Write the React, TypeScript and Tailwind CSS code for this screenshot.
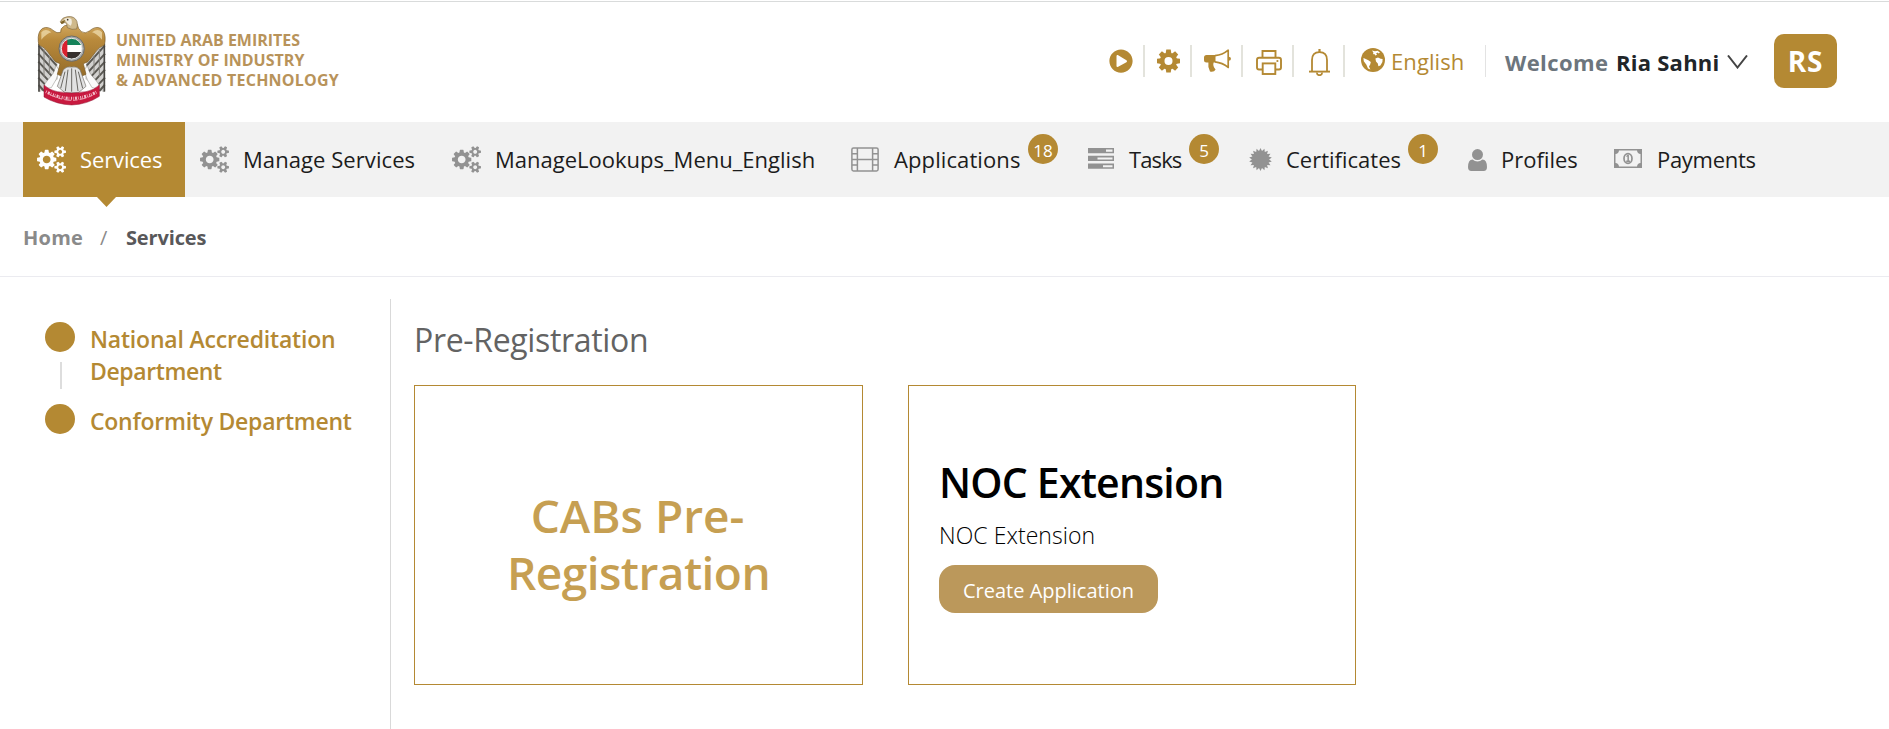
import type { ReactNode } from "react";
import { FaPlayCircle } from "react-icons/fa";

const GEAR_TEETH = [0, 45, 90, 135, 180, 225, 270, 315];

function burst(points: number, outer: number, inner: number) {
  return Array.from({ length: points * 2 }, (_, i) => {
    const a = (Math.PI * i) / points - Math.PI / 2;
    const r = i % 2 ? inner : outer;
    return `${(12 + r * Math.cos(a)).toFixed(2)},${(12 + r * Math.sin(a)).toFixed(2)}`;
  }).join(" ");
}

function CogsIcon() {
  return (
    <svg className="h-[27px] w-[29px]" viewBox="0 0 1920 1792" fill="currentColor">
      <path d="M896 896q0-106-75-181t-181-75-181 75-75 181 75 181 181 75 181-75 75-181zm768 512q0-52-38-90t-90-38-90 38-38 90q0 53 37.5 90.5t90.5 37.5 90.5-37.5 37.5-90.5zm0-1024q0-52-38-90t-90-38-90 38-38 90q0 53 37.5 90.5t90.5 37.5 90.5-37.5 37.5-90.5zm-384 421v185q0 10-7 19.5t-16 10.5l-155 24q-11 35-32 76 34 48 90 115 7 11 7 20 0 12-7 19-23 30-82.5 89.5t-78.5 59.5q-11 0-21-7l-115-90q-37 19-77 31-11 108-23 155-7 24-30 24h-186q-11 0-20-7.5t-10-17.5l-23-153q-34-10-75-31l-118 89q-7 7-20 7-11 0-21-8-144-133-144-160 0-9 7-19 10-14 41-53t47-61q-23-44-35-82l-152-24q-10-1-17-9.5t-7-19.5v-185q0-10 7-19.5t16-10.5l155-24q11-35 32-76-34-48-90-115-7-11-7-20 0-12 7-20 22-30 82-89t79-59q11 0 21 7l115 90q34-18 77-32 11-108 23-154 7-24 30-24h186q11 0 20 7.5t10 17.5l23 153q34 10 75 31l118-89q8-7 20-7 11 0 21 8 144 133 144 160 0 8-7 19-12 16-42 54t-45 60q23 48 34 82l152 23q10 2 17 10.5t7 19.5zm640 533v140q0 16-149 31-12 27-30 52 51 113 51 138 0 4-4 7-122 71-124 71-8 0-46-47t-52-68q-20 2-30 2t-30-2q-14 21-52 68t-46 47q-2 0-124-71-4-3-4-7 0-25 51-138-18-25-30-52-149-15-149-31v-140q0-16 149-31 13-29 30-52-51-113-51-138 0-4 4-7 4-2 35-20t59-34 30-16q8 0 46 46.5t52 67.5q20-2 30-2t30 2q51-71 92-112l6-2q4 0 124 70 4 3 4 7 0 25-51 138 17 23 30 52 149 15 149 31zm0-1024v140q0 16-149 31-12 27-30 52 51 113 51 138 0 4-4 7-122 71-124 71-8 0-46-47t-52-68q-20 2-30 2t-30-2q-14 21-52 68t-46 47q-2 0-124-71-4-3-4-7 0-25 51-138-18-25-30-52-149-15-149-31v-140q0-16 149-31 13-29 30-52-51-113-51-138 0-4 4-7 4-2 35-20t59-34 30-16q8 0 46 46.5t52 67.5q20-2 30-2t30 2q51-71 92-112l6-2q4 0 124 70 4 3 4 7 0 25-51 138 17 23 30 52 149 15 149 31z" />
    </svg>
  );
}

function GearIcon() {
  return (
    <svg className="h-[24px] w-[23px]" viewBox="-12 -12 24 24" fill="currentColor">
      {GEAR_TEETH.map((a) => (
        <path key={a} d="M-3 -7.5 L-2.3 -12 H2.3 L3 -7.5Z" transform={`rotate(${a})`} />
      ))}
      <circle r="6.6" fill="none" stroke="currentColor" strokeWidth="4.8" />
    </svg>
  );
}

function HornIcon() {
  return (
    <svg className="h-[24px] w-[27px]" viewBox="0 0 27 24" fill="currentColor">
      <path d="M0 8.5 Q0 6 2.5 6 H11.5 V13.5 H9.6 Q8.4 17 11.6 20.5 Q10 23.5 6 22.5 Q3.6 18 4.4 13.5 H2.5 Q0 13.5 0 11Z" />
      <path d="M11 6.7 Q18.5 6 24.2 1.2 V18.4 Q18.5 13.6 11 12.8" fill="none" stroke="currentColor" strokeWidth="1.7" strokeLinejoin="round" />
      <path d="M24.5 7.8 Q27 8 27 9.8 T24.5 11.8Z" />
    </svg>
  );
}

function PrinterIcon() {
  return (
    <svg className="h-[25px] w-[26px]" viewBox="0 0 26 25" fill="none" stroke="currentColor" strokeWidth="1.9">
      <path d="M6.5 7.5 V1 H19.5 V7.5" />
      <path d="M6.5 19.5 H3 Q1 19.5 1 17.5 V10 Q1 7.7 3.2 7.7 H22.8 Q25 7.7 25 10 V17.5 Q25 19.5 23 19.5 H19.5" />
      <rect x="6.7" y="13.4" width="12.6" height="10.6" />
      <circle cx="21.4" cy="11" r="1.1" fill="currentColor" stroke="none" />
    </svg>
  );
}

function BellIcon() {
  return (
    <svg className="h-[27px] w-[21px]" viewBox="0 0 21 27" fill="none" stroke="currentColor" strokeWidth="1.8">
      <path d="M3 22 V11 Q3 3.2 10.5 3.2 T18 11 V22" />
      <path d="M0 22.6 H21" strokeWidth="1.9" />
      <path d="M10.5 0 V3" strokeWidth="2.2" />
      <path d="M7.8 23.5 Q8 26.2 10.5 26.2 T13.2 23.5" />
    </svg>
  );
}

function GlobeIcon() {
  return (
    <svg className="h-[24px] w-[24px]" viewBox="0 0 24 24">
      <circle cx="12" cy="12" r="12" fill="currentColor" />
      <path
        fill="#fff"
        d="M11 2.6 L14 3.2 L16.6 2.8 L19 4.4 L17.6 5.6 L16.5 4.6 L15 5.8 L16.2 6.8 L14.2 7.4 L13.4 6 L12 6.2 L12.4 4.6Z
           M2.4 10 L4.2 10.8 L7.4 12.2 L9.8 14 L9.2 16.6 L8 18.6 L9.4 21.4 L7 20.6 L5.4 16.8 L2.8 13.2Z
           M14.4 10.6 L17 9.4 L19.6 10.8 L21.6 11 L21.4 14 L19.4 17.4 L17.4 18.2 L16.8 15.4 L15 13.6Z"
      />
    </svg>
  );
}

function FilmIcon() {
  return (
    <svg className="h-[25px] w-[28px]" viewBox="0 0 28 25" fill="none" stroke="currentColor" strokeWidth="1.5">
      <rect x="0.9" y="0.9" width="26.2" height="23" rx="1.6" />
      <path d="M6.4 1 V24 M21.6 1 V24 M6.4 12.4 H21.6" />
      <path d="M1 6.7 H6.4 M1 12.4 H6.4 M1 18.1 H6.4 M21.6 6.7 H27 M21.6 12.4 H27 M21.6 18.1 H27" />
    </svg>
  );
}

function TasksIcon() {
  return (
    <svg className="-mt-0.5 h-[21px] w-[26px]" viewBox="0 0 26 21" fill="currentColor">
      <path fillRule="evenodd" d="M0 0 H26 V5.2 H0Z M18 1.6 V3.7 H24.5 V1.6Z" />
      <path fillRule="evenodd" d="M0 7.8 H26 V13 H0Z M9.5 9.4 V11.5 H24.5 V9.4Z" />
      <path fillRule="evenodd" d="M0 15.6 H26 V20.8 H0Z M15 17.2 V19.3 H24.5 V17.2Z" />
    </svg>
  );
}

function CertificateIcon() {
  return (
    <svg className="h-[23px] w-[23px]" viewBox="0 0 24 24" fill="currentColor">
      <polygon points={burst(18, 12, 9)} />
    </svg>
  );
}

function UserIcon() {
  return (
    <svg className="h-[22px] w-[19px]" viewBox="0 0 19 22" fill="currentColor">
      <circle cx="9.5" cy="5.6" r="5.5" />
      <path d="M4.6 10.4 Q6.8 12.4 9.5 12.4 T14.4 10.4 Q19 10.8 19 18 Q19 22 15.6 22 H3.4 Q0 22 0 18 Q0 10.8 4.6 10.4Z" />
    </svg>
  );
}

function MoneyIcon() {
  return (
    <svg className="-mt-0.5 h-[19px] w-[28px]" viewBox="0 0 28 19" fill="currentColor">
      <path fillRule="evenodd" d="M0 0 H28 V19 H0Z M5 1.5 Q4.6 4.6 1.5 5 V14 Q4.6 14.4 5 17.5 H23 Q23.4 14.4 26.5 14 V5 Q23.4 4.6 23 1.5Z" />
      <ellipse cx="14" cy="9.5" rx="4" ry="4.9" fill="none" stroke="currentColor" strokeWidth="1.7" />
      <path d="M12.2 7 L13.6 5.8 H14.9 V11.6 H16 V12.9 H12.2 V11.6 H13.4 V7.6 L12.6 8Z" />
    </svg>
  );
}

function Emblem() {
  const wing = (
    <g>
      <path d="M28 98 L62 118 L84 160 L86 212 L54 236 L32 252 L26 248 Z" fill="#d2d1cf" />
      <path d="M28 112 L82 172 M27 136 L78 192 M27 160 L74 210 M27 184 L66 226 M27 208 L56 238 M28 230 L44 248" stroke="#5a5853" strokeWidth="6" fill="none" />
      <path d="M29 106 V250" stroke="#4a4844" strokeWidth="5" />
      <path d="M44 122 V206 M60 142 V196" stroke="#85827c" strokeWidth="3" />
      <path d="M80 172 Q76 196 56 214 Q44 226 42 242 L66 238 Q82 216 90 186Z" fill="#fafafa" stroke="#8a8883" strokeWidth="1.5" />
    </g>
  );
  return (
    <svg className="h-[92px] w-[70px]" viewBox="20 20 210 276">
      <defs>
        <linearGradient id="plumage" x1="0" y1="0" x2="0" y2="1">
          <stop offset="0" stopColor="#d3aa62" />
          <stop offset="0.3" stopColor="#b98a3c" />
          <stop offset="1" stopColor="#946b28" />
        </linearGradient>
        <clipPath id="disc"><circle cx="127" cy="121" r="31" /></clipPath>
      </defs>
      {wing}
      <g transform="translate(254 0) scale(-1 1)">{wing}</g>
      <path
        d="M106 52 Q92 60 94 72 Q82 76 74 68 Q56 52 40 60 Q24 70 27 100 L29 110 Q46 116 56 132 L78 160 L92 166 L84 198 Q104 210 127 206 Q150 210 170 198 L162 166 L176 160 L198 132 Q208 116 225 110 L227 100 Q230 70 214 60 Q198 52 180 68 Q168 78 156 70 Q146 62 143 46 Z"
        fill="url(#plumage)" stroke="#7a5a26" strokeWidth="2"
      />
      <path d="M36 72 Q48 58 66 72 Q54 74 36 94Z M218 72 Q206 58 188 72 Q200 74 218 94Z" fill="#efdcae" opacity="0.75" />
      <path d="M93 40 Q98 27 114 25 Q136 22 143 40 Q146 54 142 62 Q128 66 114 58 Q113 46 108 42 L97 46Z" fill="#cfb98b" stroke="#806a42" strokeWidth="2" />
      <path d="M104 32 Q116 26 126 32 Q130 44 124 52 Q116 50 112 42Z" fill="#f2ecdf" />
      <path d="M93 41 L108 35 L104 43 L97 47Z" fill="#7d6226" />
      <circle cx="115" cy="34" r="2.5" fill="#3c3527" />
      <circle cx="127" cy="121" r="38" fill="#a9abaa" stroke="#6b6b68" strokeWidth="3" />
      <g clipPath="url(#disc)">
        <rect x="96" y="90" width="62" height="22" fill="#16835a" />
        <rect x="96" y="110" width="62" height="22" fill="#fff" />
        <rect x="96" y="131" width="62" height="22" fill="#37312e" />
        <rect x="94" y="88" width="20" height="66" fill="#d9222f" />
      </g>
      <circle cx="127" cy="121" r="31" fill="none" stroke="#e6e8e7" strokeWidth="3" />
      <path d="M102 184 Q112 172 127 176 Q142 172 152 184 L170 234 L146 254 H108 L84 234Z" fill="#e2e2e2" stroke="#75726c" strokeWidth="2" />
      <path d="M107 190 L94 240 M116 184 L108 248 M127 180 V250 M138 184 L146 248 M147 190 L160 240" stroke="#6a6863" strokeWidth="3" />
      <path d="M44 230 Q60 246 84 250 Q127 258 170 250 Q194 246 210 230 L210 264 Q174 288 127 290 Q80 288 44 266Z" fill="#c8193f" stroke="#8f1230" strokeWidth="1.5" />
      <path d="M50 250 Q88 270 127 270 Q166 270 204 250" stroke="#f3bfcb" strokeWidth="9" strokeDasharray="2 4 6 3 2 5 3 3" fill="none" />
      <path d="M60 258 Q96 276 127 276 Q160 276 196 258" stroke="#f3bfcb" strokeWidth="2.5" fill="none" strokeDasharray="22 5 14 6" />
    </svg>
  );
}

function Divider({ className }: { className: string }) {
  return <span className={`h-8 w-0.5 bg-[#e3e3dc] ${className}`} />;
}

function Header() {
  return (
    <header className="flex h-[120px] shrink-0 items-center pl-[36px]">
      <div className="-mt-0.5 flex w-[1073px] items-center">
        <Emblem />
        <div className="-mt-0.5 ml-[10px] text-[16px] leading-5 font-bold whitespace-nowrap text-[#b8935a]">
          <div className="tracking-[-0.02px]">UNITED ARAB EMIRITES</div>
          <div className="tracking-[0.02px]">MINISTRY OF INDUSTRY</div>
          <div className="tracking-[0.22px]">&amp; ADVANCED TECHNOLOGY</div>
        </div>
      </div>
      <div className="-mt-0.5 flex items-center text-[#b48933]">
        <FaPlayCircle className="h-6 w-6" />
        <Divider className="ml-2.5" />
        <span className="ml-3"><GearIcon /></span>
        <Divider className="ml-2.5" />
        <span className="ml-3"><HornIcon /></span>
        <Divider className="ml-2.5" />
        <span className="ml-[13px] pt-0.5"><PrinterIcon /></span>
        <Divider className="ml-2.5" />
        <span className="ml-[15px] pt-0.5"><BellIcon /></span>
        <Divider className="ml-[13px]" />
        <span className="ml-4 pb-0.5"><GlobeIcon /></span>
        <span className="ml-[6px] w-[94px] text-[22px] leading-8 font-medium tracking-[0.1px]">English</span>
      </div>
      <span className="-mt-0.5 h-8 w-px bg-[#e3e3e3]" />
      <div className="-mt-px flex items-center text-[22px] leading-8 font-bold whitespace-nowrap">
        <span className="ml-[19px] w-[111px] tracking-[0.4px] text-[#6c757d]">Welcome</span>
        <span className="w-[111px] tracking-[0.25px] text-[#212529]">Ria Sahni</span>
        <svg className="h-[14px] w-[21px]" viewBox="0 0 21 14" fill="none" stroke="#444" strokeWidth="2">
          <path d="M1 0.5 L10.5 12.5 L20 0.5" />
        </svg>
      </div>
      <div className="-mt-0.5 ml-[26px] flex h-[54px] w-[63px] items-center justify-center rounded-[10px] bg-[#b48933] text-[28px] leading-none font-bold tracking-[0.8px] text-white">
        RS
      </div>
    </header>
  );
}

type Item = { label: string; icon: ReactNode; item: string; slot: string; text: string; badge?: string };

const ITEMS: Item[] = [
  { label: "Manage Services", icon: <CogsIcon />, item: "w-[252px]", slot: "w-[43px]", text: "tracking-[0.07px]" },
  { label: "ManageLookups_Menu_English", icon: <CogsIcon />, item: "w-[399px]", slot: "w-[43px]", text: "" },
  { label: "Applications", icon: <FilmIcon />, item: "w-[237px]", slot: "w-[43px]", text: "w-[134px] tracking-[0.1px]", badge: "18" },
  { label: "Tasks", icon: <TasksIcon />, item: "w-[161px]", slot: "w-[41px]", text: "w-[60px] tracking-[-0.9px]", badge: "5" },
  { label: "Certificates", icon: <CertificateIcon />, item: "w-[219px]", slot: "w-[37px]", text: "w-[122px]", badge: "1" },
  { label: "Profiles", icon: <UserIcon />, item: "w-[146px]", slot: "w-[33px]", text: "" },
  { label: "Payments", icon: <MoneyIcon />, item: "w-[150px]", slot: "w-[43px]", text: "tracking-[-0.3px]" },
];

function Nav() {
  return (
    <nav className="flex h-[75px] shrink-0 bg-[#f2f2f2] pl-[23px] text-[22px] font-medium whitespace-nowrap text-[#1c1c1c]">
      <div className="relative mr-[15px] flex w-[162px] items-center bg-[#b48933] pl-3.5 text-white">
        <span className="w-[43px]"><CogsIcon /></span>
        <span className="tracking-[-0.12px]">Services</span>
        <svg className="absolute top-full left-[74px] h-2.5 w-[19px]" viewBox="0 0 19 10">
          <path d="M0 0 H19 L9.5 10Z" fill="#b48933" />
        </svg>
      </div>
      {ITEMS.map((it) => (
        <div key={it.label} className={`flex shrink-0 items-center ${it.item}`}>
          <span className={`shrink-0 text-[#929292] ${it.slot}`}>{it.icon}</span>
          <span className={it.text}>{it.label}</span>
          {it.badge && (
            <span className="mt-3 flex h-[30px] w-[30px] items-center justify-center self-start rounded-full bg-[#b48933] pt-[3px] text-[17px] leading-none font-normal text-white">
              {it.badge}
            </span>
          )}
        </div>
      ))}
    </nav>
  );
}

function Step({ children, connector }: { children: ReactNode; connector?: boolean }) {
  return (
    <li className="flex h-[82px]">
      <div className="flex w-[30px] flex-col items-center">
        <span className="h-[30px] w-[30px] rounded-full bg-[#b48933]" />
        {connector && <span className="mt-2.5 ml-0.5 h-[27px] w-0.5 bg-[#ddd]" />}
      </div>
      <div className="mt-px ml-[15px] text-[23px] leading-8 font-semibold whitespace-nowrap text-[#b48933]">{children}</div>
    </li>
  );
}

export default function App() {
  return (
    <div className="flex h-[729px] w-[1889px] flex-col overflow-hidden bg-white font-['Open_Sans','Noto_Sans',sans-serif]">
      <div className="h-0.5 shrink-0 border-b border-[#d9dbdb]" />
      <Header />
      <Nav />
      <div className="flex h-20 shrink-0 items-center border-b border-[#ebebf0] pt-0.5 pl-[23px] text-[20px] font-bold">
        <span className="w-[77px] tracking-[0.23px] text-[#8a8a8a]">Home</span>
        <span className="w-[26px] font-normal text-[#8a8a8a]">/</span>
        <span className="tracking-[-0.15px] text-[#58585a]">Services</span>
      </div>
      <main className="flex flex-1 pt-[22px]">
        <aside className="w-[391px] border-r border-[#d9d9d9] pt-[23px] pl-[45px]">
          <ul>
            <Step connector>
              <div className="tracking-[-0.2px]">National Accreditation</div>
              <div className="tracking-[-0.4px]">Department</div>
            </Step>
            <Step>
              <div className="tracking-[-0.25px]">Conformity Department</div>
            </Step>
          </ul>
        </aside>
        <section className="pt-[21px] pl-[23px]">
          <h1 className="mb-[25px] text-[32px] leading-10 font-normal tracking-[-0.34px] text-[#636363]">Pre-Registration</h1>
          <div className="flex">
            <div className="mr-[45px] h-[300px] w-[449px] border border-[#b48933] pt-[101px] text-center text-[46px] leading-[57px] font-semibold text-[#c69f52]">
              <div className="-ml-0.5">CABs Pre-</div>
              <div className="tracking-[-0.54px]">Registration</div>
            </div>
            <div className="flex h-[300px] w-[448px] flex-col items-start border border-[#b48933] pt-[72px] pl-[30px] text-black">
              <h2 className="text-[41px] leading-[48px] font-semibold tracking-[-0.8px]">NOC Extension</h2>
              <p className="mt-3.5 text-[23px] leading-[30px] font-[350] tracking-[0.06px]">NOC Extension</p>
              <button className="mt-[15px] h-12 w-[219px] rounded-2xl bg-[#bb985b] pt-[3px] text-[20px] text-white">
                Create Application
              </button>
            </div>
          </div>
        </section>
      </main>
    </div>
  );
}
